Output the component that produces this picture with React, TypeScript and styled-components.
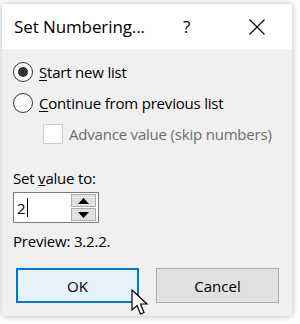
import styled, { createGlobalStyle } from 'styled-components'

const GlobalStyle = createGlobalStyle`
  html, body {
    margin: 0;
    padding: 0;
    background: #ffffff;
  }
  body {
    font-family: 'Open Sans', 'Noto Sans', sans-serif;
    color: #000;
  }
`

export default function App() {
  return (
    <>
      <GlobalStyle />
      <Page>
        <Dialog>
          <TitleBar>
            <Title>Set Numbering...</Title>
            <HelpButton>?</HelpButton>
            <CloseButton aria-label="close">
              <svg width="16" height="16" viewBox="0 0 16 16">
                <path d="M0.5 0.5 L15.5 15.5 M15.5 0.5 L0.5 15.5" stroke="#000" strokeWidth="1.1" fill="none" />
              </svg>
            </CloseButton>
          </TitleBar>
          <Body>
            <OptionRow>
              <Radio $checked />
              <Label>
                <u>S</u>tart new list
              </Label>
            </OptionRow>
            <OptionRow $top={11}>
              <Radio />
              <Label>
                <u>C</u>ontinue from previous list
              </Label>
            </OptionRow>
            <OptionRow $top={11} $indent={30}>
              <Checkbox />
              <Label $muted>Advance value (skip numbers)</Label>
            </OptionRow>
            <FieldLabel>
              Set <u>v</u>alue to:
            </FieldLabel>
            <SpinBox>
              <SpinValue>
                2<Caret />
              </SpinValue>
              <SpinButtons>
                <SpinButton>
                  <svg width="11" height="6" viewBox="0 0 11 6">
                    <path d="M5.5 0 L11 6 L0 6 Z" fill="#000" />
                  </svg>
                </SpinButton>
                <SpinButton>
                  <svg width="11" height="6" viewBox="0 0 11 6">
                    <path d="M0 0 L11 0 L5.5 6 Z" fill="#000" />
                  </svg>
                </SpinButton>
              </SpinButtons>
            </SpinBox>
            <Preview>Preview: 3.2.2.</Preview>
            <ButtonRow>
              <DialogButton $primary>
                OK
                <Pointer width="19" height="27" viewBox="0 0 19 27">
                  <path
                    d="M1 1 L1 21 L6 16.5 L9.5 25 L13 23.5 L9.5 15 L16 15 Z"
                    fill="#fff"
                    stroke="#000"
                    strokeWidth="1.2"
                    strokeLinejoin="miter"
                  />
                </Pointer>
              </DialogButton>
              <DialogButton>Cancel</DialogButton>
            </ButtonRow>
          </Body>
        </Dialog>
      </Page>
    </>
  )
}

const Page = styled.div`
  width: 300px;
  height: 324px;
  padding: 4px 0 0 2px;
  box-sizing: border-box;
`

const Dialog = styled.div`
  width: 290px;
  height: 312px;
  background: #f0f0f0;
  box-shadow: 0 0 7px rgba(0, 0, 0, 0.28);
  display: flex;
  flex-direction: column;
`

const TitleBar = styled.div`
  height: 45px;
  background: #ffffff;
  display: flex;
  align-items: center;
  padding: 0 0 0 12px;
`

const Title = styled.div`
  font-size: 17px;
  width: 169px;
  letter-spacing: -0.1px;
`

const HelpButton = styled.div`
  font-size: 17px;
  width: 66px;
`

const CloseButton = styled.div`
  display: flex;
  align-items: center;
`

const Body = styled.div`
  display: flex;
  flex-direction: column;
  padding: 13px 0 0 11px;
  font-size: 15px;
`

const OptionRow = styled.div<{ $top?: number; $indent?: number }>`
  display: flex;
  align-items: center;
  gap: 6px;
  height: 20px;
  margin-top: ${(p) => p.$top ?? 0}px;
  margin-left: ${(p) => p.$indent ?? 0}px;
`

const Radio = styled.span<{ $checked?: boolean }>`
  width: 20px;
  height: 20px;
  box-sizing: border-box;
  border: 1px solid #333;
  border-radius: 50%;
  background: #fff;
  display: flex;
  align-items: center;
  justify-content: center;

  &::after {
    content: '';
    width: 10px;
    height: 10px;
    border-radius: 50%;
    background: #333;
    display: ${(p) => (p.$checked ? 'block' : 'none')};
  }
`

const Checkbox = styled.span`
  width: 20px;
  height: 20px;
  box-sizing: border-box;
  border: 1px solid #cccccc;
  background: #fff;
`

const Label = styled.span<{ $muted?: boolean }>`
  color: ${(p) => (p.$muted ? '#6d6d6d' : '#000')};
  line-height: 20px;
  white-space: nowrap;
  letter-spacing: -0.2px;

  u {
    text-underline-offset: 2px;
  }
`

const FieldLabel = styled.div`
  margin-top: 24px;
  line-height: 20px;
  letter-spacing: -0.2px;
`

const SpinBox = styled.div`
  margin-top: 4px;
  width: 86px;
  height: 31px;
  box-sizing: border-box;
  border: 1px solid #7a7a7a;
  background: #fff;
  display: flex;
  align-items: center;
  justify-content: space-between;
  padding: 0 2px 0 3px;
`

const SpinValue = styled.div`
  display: flex;
  align-items: center;
  font-size: 15px;
`

const Caret = styled.span`
  width: 1px;
  height: 19px;
  background: #000;
  margin-left: 1px;
`

const SpinButtons = styled.div`
  display: flex;
  flex-direction: column;
  gap: 1px;
`

const SpinButton = styled.div`
  width: 25px;
  height: 13px;
  box-sizing: border-box;
  background: #e1e1e1;
  border: 1px solid #adadad;
  display: flex;
  align-items: center;
  justify-content: center;
`

const Preview = styled.div`
  margin-top: 8px;
  line-height: 20px;
  letter-spacing: -0.2px;
`

const ButtonRow = styled.div`
  margin-top: 17px;
  margin-left: 3px;
  display: flex;
  gap: 17px;
`

const DialogButton = styled.button<{ $primary?: boolean }>`
  position: relative;
  width: 123px;
  height: 35px;
  box-sizing: border-box;
  font-family: inherit;
  font-size: 15px;
  color: #000;
  background: ${(p) => (p.$primary ? '#e5f1fb' : '#e1e1e1')};
  border: ${(p) => (p.$primary ? '2px solid #0078d7' : '1px solid #adadad')};
  padding: 0;
`

const Pointer = styled.svg`
  position: absolute;
  left: 113px;
  top: 19px;
`
